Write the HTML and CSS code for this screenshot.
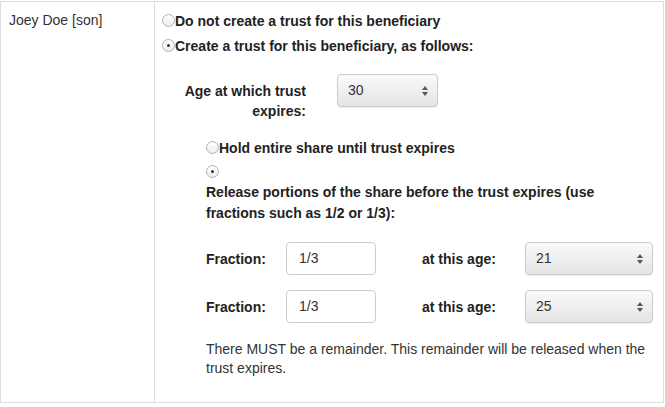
FILE: index.html
```html
<!DOCTYPE html>
<html lang="en">
  <head>
    <meta charset="UTF-8" />
    <title>Trust options</title>
    <link rel="stylesheet" href="styles.css">
  </head>
  <body>
    <table class="bene">
      <tr>
        <td class="who">Joey Doe [son]</td>
        <td class="opts">
          <div class="opt"><span class="radio"></span>Do not create a trust for this beneficiary</div>
          <div class="opt"><span class="radio on"></span>Create a trust for this beneficiary, as follows:</div>

          <div class="age-row">
            <div class="age-label">Age at which trust expires:</div>
            <div class="select age-select">30<span class="arrows"></span></div>
          </div>

          <div class="sub">
            <div class="opt hold"><span class="radio"></span>Hold entire share until trust expires</div>
            <div class="opt only"><span class="radio on"></span></div>
            <div class="release">Release portions of the share before the trust expires (use fractions such as 1/2 or 1/3):</div>

            <div class="frac-row">
              <span class="frac-label">Fraction:</span>
              <div class="input">1/3</div>
              <span class="at-label">at this age:</span>
              <div class="select frac-select">21<span class="arrows"></span></div>
            </div>
            <div class="frac-row">
              <span class="frac-label">Fraction:</span>
              <div class="input">1/3</div>
              <span class="at-label">at this age:</span>
              <div class="select frac-select">25<span class="arrows"></span></div>
            </div>

            <p class="note">There MUST be a remainder. This remainder will be released when the trust expires.</p>
          </div>
        </td>
      </tr>
    </table>
  </body>
</html>
```

FILE: styles.css
```css
* {
  margin: 0;
  padding: 0;
  box-sizing: border-box;
}
body {
  padding-top: 1px;
  background: #fff;
  font-family: "Liberation Sans", Arial, sans-serif;
  font-size: 14px;
  color: #333;
}
.bene {
  width: 664px;
  border-collapse: collapse;
}
.bene td {
  border: 1px solid #ddd;
  vertical-align: top;
}
.who {
  width: 154px;
  padding: 8px 8px;
  line-height: 20px;
}
.opts {
  padding: 6px 8px 24px 7px;
}
.opt {
  display: flex;
  align-items: center;
  height: 25px;
  font-weight: bold;
  color: #222;
}
.radio {
  width: 13px;
  height: 13px;
  border-radius: 50%;
  border: 1px solid #b4b4b4;
  background: linear-gradient(#fff, #ececec);
  position: relative;
  flex: none;
}
.radio.on::after {
  content: "";
  position: absolute;
  left: 4px;
  top: 4px;
  width: 3px;
  height: 3px;
  border-radius: 50%;
  background: #333;
}
.age-row {
  display: flex;
  align-items: flex-start;
  margin-top: 16px;
  padding-left: 20px;
}
.age-label {
  width: 124px;
  padding-top: 7px;
  text-align: right;
  font-weight: bold;
  line-height: 20px;
  color: #222;
}
.select {
  position: relative;
  height: 33px;
  line-height: 31px;
  padding-left: 10px;
  border: 1px solid #ccc;
  border-radius: 4px;
  background: linear-gradient(#fafafa, #e4e4e4);
  box-shadow: 0 1px 1px rgba(0, 0, 0, 0.08);
  color: #333;
}
.age-select {
  width: 101px;
  margin-left: 31px;
}
.arrows {
  position: absolute;
  right: 8px;
  top: 11px;
  width: 7px;
  height: 10px;
}
.arrows::before,
.arrows::after {
  content: "";
  position: absolute;
  left: 0;
  border-left: 3.5px solid transparent;
  border-right: 3.5px solid transparent;
}
.arrows::before {
  top: 0;
  border-bottom: 4px solid #555;
}
.arrows::after {
  bottom: 0;
  border-top: 4px solid #555;
}
.sub {
  padding-left: 44px;
}
.hold {
  margin-top: 14px;
}
.only {
  height: 22px;
}
.release {
  font-weight: bold;
  color: #222;
  line-height: 21px;
  padding-right: 50px;
}
.frac-row {
  display: flex;
  align-items: center;
  height: 33px;
  margin-top: 18px;
  font-weight: bold;
  color: #222;
}
.frac-row + .frac-row {
  margin-top: 15px;
}
.frac-label {
  width: 80px;
}
.input {
  width: 90px;
  height: 33px;
  line-height: 31px;
  padding-left: 12px;
  border: 1px solid #ccc;
  border-radius: 4px;
  background: #fff;
  font-weight: normal;
  color: #333;
}
.at-label {
  width: 103px;
  margin-left: 46px;
}
.frac-select {
  width: 128px;
  font-weight: normal;
}
.note {
  margin-top: 17px;
  line-height: 19px;
  padding-right: 5px;
}
```
